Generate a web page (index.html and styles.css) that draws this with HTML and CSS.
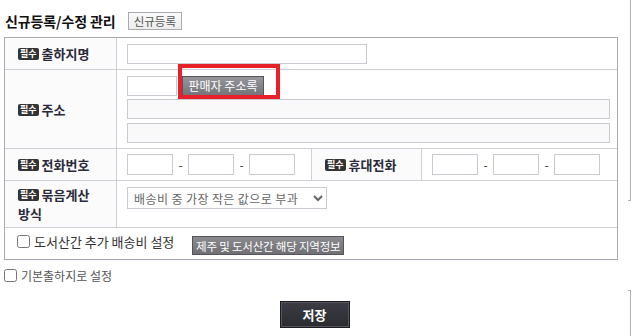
FILE: index.html
```html
<!DOCTYPE html>
<html>
<head>
    <title>출하지 관리</title>
    <link rel="stylesheet" href="styles.css">
</head>
<body>
    <div class="page">
        <div class="head">
            <h1>신규등록/수정 관리</h1>
            <button class="btn-light">신규등록</button>
        </div>

        <table class="form">
            <colgroup>
                <col class="c-label">
                <col class="c-field">
                <col class="c-label2">
                <col class="c-field2">
            </colgroup>
            <tr class="r-name">
                <th><span class="req">필수</span> 출하지명</th>
                <td colspan="3"><input type="text" class="in-name"></td>
            </tr>
            <tr class="r-addr">
                <th><span class="req">필수</span> 주소</th>
                <td colspan="3">
                    <div class="zip-line">
                        <input type="text" class="in-zip">
                        <button class="btn-gray">판매자 주소록</button>
                        <span class="mark"></span>
                    </div>
                    <input type="text" class="in-addr" readonly>
                    <input type="text" class="in-addr" readonly>
                </td>
            </tr>
            <tr class="r-phone">
                <th><span class="req">필수</span> 전화번호</th>
                <td>
                    <input type="text" class="in-tel"><span class="dash">-</span><input type="text" class="in-tel"><span class="dash">-</span><input type="text" class="in-tel">
                </td>
                <th><span class="req">필수</span> 휴대전화</th>
                <td>
                    <input type="text" class="in-tel"><span class="dash">-</span><input type="text" class="in-tel"><span class="dash">-</span><input type="text" class="in-tel">
                </td>
            </tr>
            <tr class="r-calc">
                <th><span class="req">필수</span> 묶음계산 방식</th>
                <td colspan="3">
                    <select class="sel-calc">
                        <option>배송비 중 가장 작은 값으로 부과</option>
                        <option>배송비 중 가장 큰 값으로 부과</option>
                    </select>
                </td>
            </tr>
            <tr class="r-island">
                <td colspan="4">
                    <label class="chk"><input type="checkbox"> 도서산간 추가 배송비 설정</label>
                    <button class="btn-gray btn-island">제주 및 도서산간 해당 지역정보</button>
                </td>
            </tr>
        </table>

        <label class="chk chk-default"><input type="checkbox"> 기본출하지로 설정</label>

        <div class="actions">
            <button class="btn-save">저장</button>
        </div>
    </div>

    <div class="edge edge-top"></div>
    <div class="edge edge-bottom"></div>
</body>
</html>
```

FILE: styles.css
```css
body {
    margin: 0;
    font-family: "Noto Sans CJK KR", "Noto Sans", sans-serif;
    font-size: 12px;
    color: #333;
    background: #fff;
}
.page {
    padding: 11px 0 0 4px;
    width: 614px;
}
.head {
    display: flex;
    align-items: center;
    height: 19px;
    padding-left: 1px;
}
h1 {
    margin: 0;
    font-size: 14px;
    font-weight: bold;
    color: #111;
    letter-spacing: -0.1px;
}
.btn-light {
    margin-left: 12px;
    height: 18px;
    padding: 0 5px;
    border: 1px solid #a9a9b1;
    background: linear-gradient(#fbfbfb, #ececec);
    font-family: inherit;
    font-size: 11.5px;
    line-height: 16px;
    color: #555;
}

/* 입력 폼 */
.form {
    margin-top: 7px;
    width: 614px;
    table-layout: fixed;
    border-collapse: separate;
    border-spacing: 0;
    border: 1px solid #a9a9b3;
}
.c-label { width: 111px; }
.c-field { width: 195px; }
.c-label2 { width: 110px; }
.c-field2 { width: 196px; }
.form th, .form td {
    border-top: 1px solid #cfcfd7;
    border-left: 1px solid #cfcfd7;
    padding: 0 10px;
    vertical-align: middle;
    text-align: left;
}
.form tr:first-child > * { border-top: 0; }
.form tr > *:first-child { border-left: 0; }
.form th {
    background: #fbfbfc;
    padding-left: 13px;
    font-size: 13px;
    font-weight: bold;
    color: #2a2a3a;
    word-break: keep-all;
    line-height: 19px;
}
.req {
    display: inline-block;
    height: 12px;
    padding: 0 2px;
    border-radius: 2px;
    background: #333;
    color: #fff;
    font-size: 9px;
    line-height: 12px;
    vertical-align: 2px;
}
.r-name { height: 31px; }
.r-addr > td { padding-top: 5px; padding-bottom: 5px; }
.r-phone { height: 32px; }
.r-calc { height: 47px; }
.r-calc > td { vertical-align: top; padding-top: 6px; }
.r-island { height: 32px; }
.r-island > td { padding-left: 12px; }

input[type=text] {
    box-sizing: border-box;
    height: 20px;
    border: 1px solid #cacad2;
    background: #fff;
    font-family: inherit;
    font-size: 12px;
    padding: 0 3px;
    margin: 0;
    vertical-align: middle;
}
.in-name { width: 240px; }
.zip-line {
    position: relative;
    display: flex;
    align-items: center;
    height: 21px;
}
.in-zip { width: 50px; }
.in-addr {
    display: block;
    width: 483px;
    margin-top: 3px !important;
    background: #f9f9fa !important;
}
.in-addr + .in-addr { margin-top: 4px !important; }
.in-tel { width: 46px; height: 21px !important; }
.dash {
    display: inline-block;
    width: 15px;
    text-align: center;
    color: #333;
    vertical-align: middle;
}

.btn-gray {
    height: 20px;
    padding: 0 6px;
    border: 1px solid #55555b;
    background: linear-gradient(#95959b, #74747a);
    color: #fff;
    font-family: inherit;
    font-size: 12px;
    line-height: 18px;
    white-space: nowrap;
}
.zip-line .btn-gray { margin-left: 5px; width: 82px; padding: 0; }
.mark {
    position: absolute;
    left: 51px;
    top: -11px;
    width: 94px;
    height: 27px;
    border: 4px solid #e8202a;
}

.sel-calc {
    width: 200px;
    height: 22px;
    border: 1px solid #cacad2;
    background: #fff;
    color: #666;
    font-family: inherit;
    font-size: 12px;
    letter-spacing: 0.4px;
    padding: 0 2px;
}

.chk {
    display: inline-flex;
    align-items: center;
    font-size: 13px;
    color: #333;
}
.chk input {
    width: 13px;
    height: 13px;
    margin: 0 4px 0 0;
}
.btn-island {
    margin-left: 15px;
    height: 19px;
    padding: 0 3px;
    font-size: 11.5px;
    letter-spacing: -0.2px;
    background: linear-gradient(#8a8a8f, #6f6f74);
    vertical-align: middle;
}
.chk-default {
    margin-top: 7px;
    color: #555;
    font-size: 12px;
}

.actions {
    display: flex;
    justify-content: center;
    margin-top: 16px;
    padding-left: 7px;
}
.btn-save {
    width: 70px;
    height: 27px;
    border: 1px solid #1c1c20;
    box-shadow: inset 0 0 0 1px #55565c;
    background: linear-gradient(#3c3d44, #2b2c31);
    color: #fff;
    font-family: inherit;
    font-size: 13px;
    font-weight: bold;
}

/* 오른쪽 패널 경계선 */
.edge {
    position: absolute;
    left: 628px;
    width: 2px;
    border-right: 1px solid #b0b0bb;
}
.edge-top {
    top: 0;
    height: 200px;
    border-bottom: 1px solid #b0b0bb;
}
.edge-bottom {
    top: 290px;
    height: 46px;
    border-top: 1px solid #b0b0bb;
}
```
